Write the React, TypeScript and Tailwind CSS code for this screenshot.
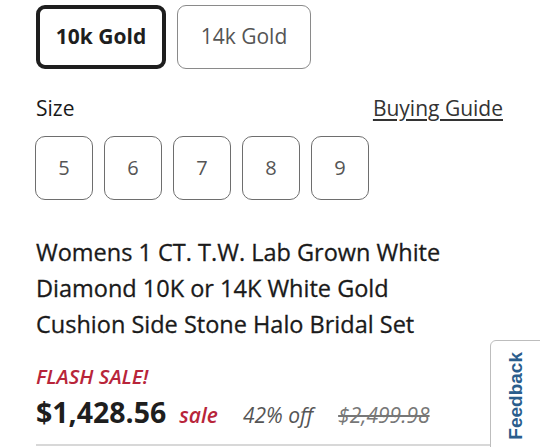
export default function App() {
  const sizes = ["5", "6", "7", "8", "9"];

  return (
    <div
      className="relative w-[540px] h-[447px] overflow-hidden bg-white text-[#222]"
      style={{ fontFamily: '"Open Sans", sans-serif' }}
    >
      <div className="pl-[36px] pr-[36px] pt-[5px]">
        {/* Metal options */}
        <div className="flex gap-[11px]">
          <button className="w-[130px] h-[64px] rounded-[9px] border-[4px] border-[#1e1e1e] text-[21px] font-bold text-[#1e1e1e]">
            10k Gold
          </button>
          <button className="w-[134px] h-[64px] rounded-[9px] border border-[#8a8a8a] text-[21px] text-[#555]">
            14k Gold
          </button>
        </div>

        {/* Size header */}
        <div className="flex items-center justify-between mt-[26px] h-[28px]">
          <span className="text-[21px] text-[#1a1a1a]">Size</span>
          <a className="text-[21px] text-[#333] underline underline-offset-[3px] mr-[1px]">
            Buying Guide
          </a>
        </div>

        {/* Sizes */}
        <div className="flex gap-[11px] mt-[13px] -ml-[1px]">
          {sizes.map((s) => (
            <div
              key={s}
              className="w-[58px] h-[64px] rounded-[10px] border border-[#6e6e6e] flex items-center justify-center text-[20px] text-[#555]"
            >
              {s}
            </div>
          ))}
        </div>

        {/* Title */}
        <h1 className="mt-[34px] text-[23.5px] leading-[36px] text-[#1a1a1a] [-webkit-text-stroke:0.3px_#1a1a1a]">
          Womens 1 CT. T.W. Lab Grown White
          <br />
          Diamond 10K or 14K White Gold
          <br />
          Cushion Side Stone Halo Bridal Set
        </h1>

        {/* Price */}
        <div className="mt-[22px] text-[20.5px] leading-[24px] italic font-semibold text-[#b8253a]">
          FLASH SALE!
        </div>
        <div className="flex items-baseline mt-[6px]">
          <span className="text-[28.5px] font-bold text-[#1e1e1e] leading-[36px]">$1,428.56</span>
          <span className="ml-[13px] text-[21px] italic font-semibold text-[#b8253a]">sale</span>
          <span className="ml-[25px] text-[21px] italic text-[#555]">42% off</span>
          <span className="ml-[25px] text-[21px] italic text-[#777] line-through">$2,499.98</span>
        </div>
      </div>
      <div className="absolute left-[36px] top-[444px] w-[454px] h-[2px] bg-[#d8d8d8]" />

      {/* Feedback tab */}
      <div className="absolute left-[490px] top-[340px] w-[60px] h-[120px] bg-white border border-[#bdbdbd] rounded-tl-[6px] flex items-start pt-[11px] pl-[11px]">
        <span
          className="block text-[19px] font-bold text-[#2a5d8c] [writing-mode:vertical-rl] rotate-180"
          style={{ fontFamily: '"Liberation Sans", Arial, sans-serif' }}
        >
          Feedback
        </span>
      </div>
    </div>
  );
}
